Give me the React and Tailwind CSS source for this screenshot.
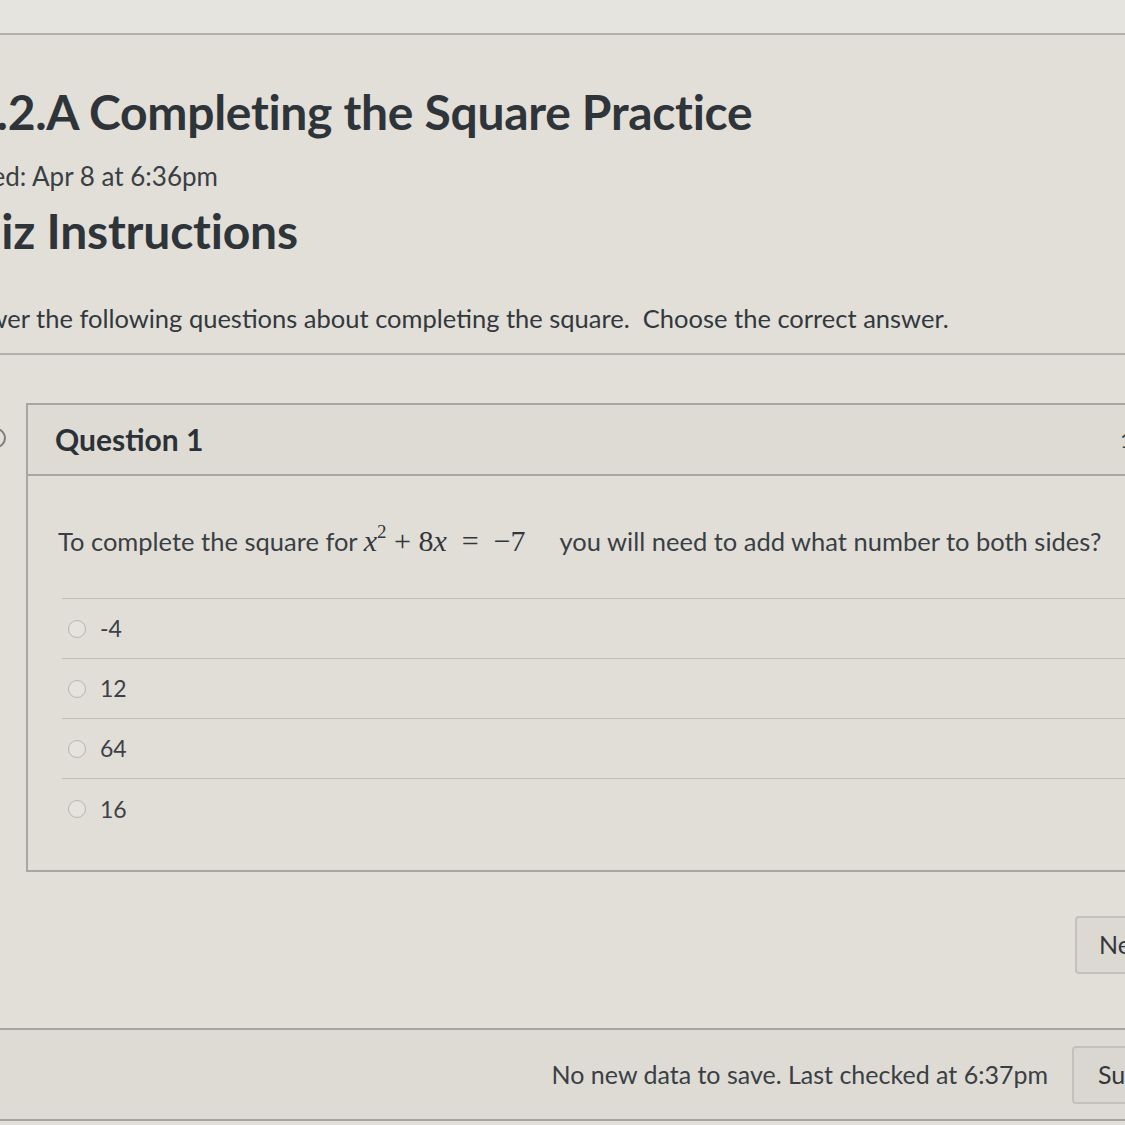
import React from 'react'

const answers = ['-4', '12', '64', '16']

export default function App(){
  return (
    <div className="w-[1125px] h-[1125px] overflow-hidden bg-[#e2dfd9] font-['Lato','Noto_Sans',sans-serif] text-[#2f3439]">
      {/* top strip */}
      <div className="h-[35px] bg-[#e6e4df] border-b-2 border-[#b3b0ab]" />

      {/* heading block */}
      <div className="pt-[48px] whitespace-nowrap">
        <h1 className="-ml-[31px] text-[48px] leading-[58px] font-bold tracking-[-0.3px]">2.2.A Completing the Square Practice</h1>
        <div className="mt-[18px] -ml-[63px] text-[26px] leading-[34px] text-[#3a3f44]">Started: Apr 8 at 6:36pm</div>
        <h2 className="mt-[10px] -ml-[64px] text-[48px] leading-[56px] font-bold tracking-[-0.2px]">Quiz Instructions</h2>
        <p className="mt-[42px] -ml-[55px] text-[25.5px] leading-[34px] text-[#33383d]">Answer the following questions about completing the square.&nbsp; Choose the correct answer.</p>
      </div>
      <div className="mt-[18px] border-b-2 border-[#b3b0ab]" />

      {/* question card */}
      <div className="relative mt-[48px] ml-[26px] -mr-[40px] border-2 border-[#a9a6a1] bg-[#e1ded8]">
        <div className="absolute -left-[42px] top-[23px] w-[20px] h-[20px] rounded-full border-2 border-[#7f7c78]" />
        <div className="flex items-center justify-between h-[71px] pl-[27px] bg-[#dedbd5] border-b-2 border-[#a9a6a1]">
          <span className="text-[30px] font-bold text-[#2c3136]">Question 1</span>
          <span className="w-[43px] whitespace-nowrap text-[22px] text-[#3a3f44]">1 pts</span>
        </div>
        <div className="pl-[30px] pt-[42px] pb-[31px]">
          <div className="flex items-baseline whitespace-nowrap text-[25.5px] text-[#3a3f44] h-[40px]">
            <span>To complete the square for&nbsp;</span>
            <span className="font-['Liberation_Serif','DejaVu_Serif',serif] text-[30px] text-[#33373b]">
              <i>x</i><sup className="text-[19px] -top-[13px]">2</sup>&nbsp;+&nbsp;8<i>x</i>&nbsp;&nbsp;=&nbsp;&nbsp;−7
            </span>
            <span className="ml-[34px]">you will need to add what number to both sides?</span>
          </div>
          <div className="mt-[40px] ml-[4px] border-t border-[#c2bfba]">
            {answers.map((a, i) => (
              <div key={a} className={`flex items-center h-[60px] ${i < answers.length - 1 ? 'border-b border-[#c2bfba]' : ''}`}>
                <span className="ml-[6px] w-[18px] h-[18px] rounded-full border border-[#b9b6b1] bg-[#e6e3de]" />
                <span className="ml-[14px] text-[23px] text-[#3c4146]">{a}</span>
              </div>
            ))}
          </div>
        </div>
      </div>

      {/* next button */}
      <div className="flex justify-end mt-[44px] -mr-[60px]">
        <button className="w-[110px] h-[58px] rounded-[4px] border-2 border-[#c4c1bc] bg-[#dcd9d3] text-[25px] text-[#33383d] text-left pl-[22px]">Next ›</button>
      </div>

      {/* footer */}
      <div className="mt-[54px] border-t-2 border-[#a6a3a0] h-[93px] flex items-center justify-end -mr-[127px] bg-[#dedbd5] border-b-2">
        <span className="text-[25px] text-[#3a3f44] mr-[24px]">No new data to save. Last checked at 6:37pm</span>
        <button className="w-[180px] h-[58px] rounded-[4px] border-2 border-[#c4c1bc] bg-[#dad7d1] text-[25px] text-[#33383d] text-left pl-[24px]">Submit Quiz</button>
      </div>
    </div>
  )
}
